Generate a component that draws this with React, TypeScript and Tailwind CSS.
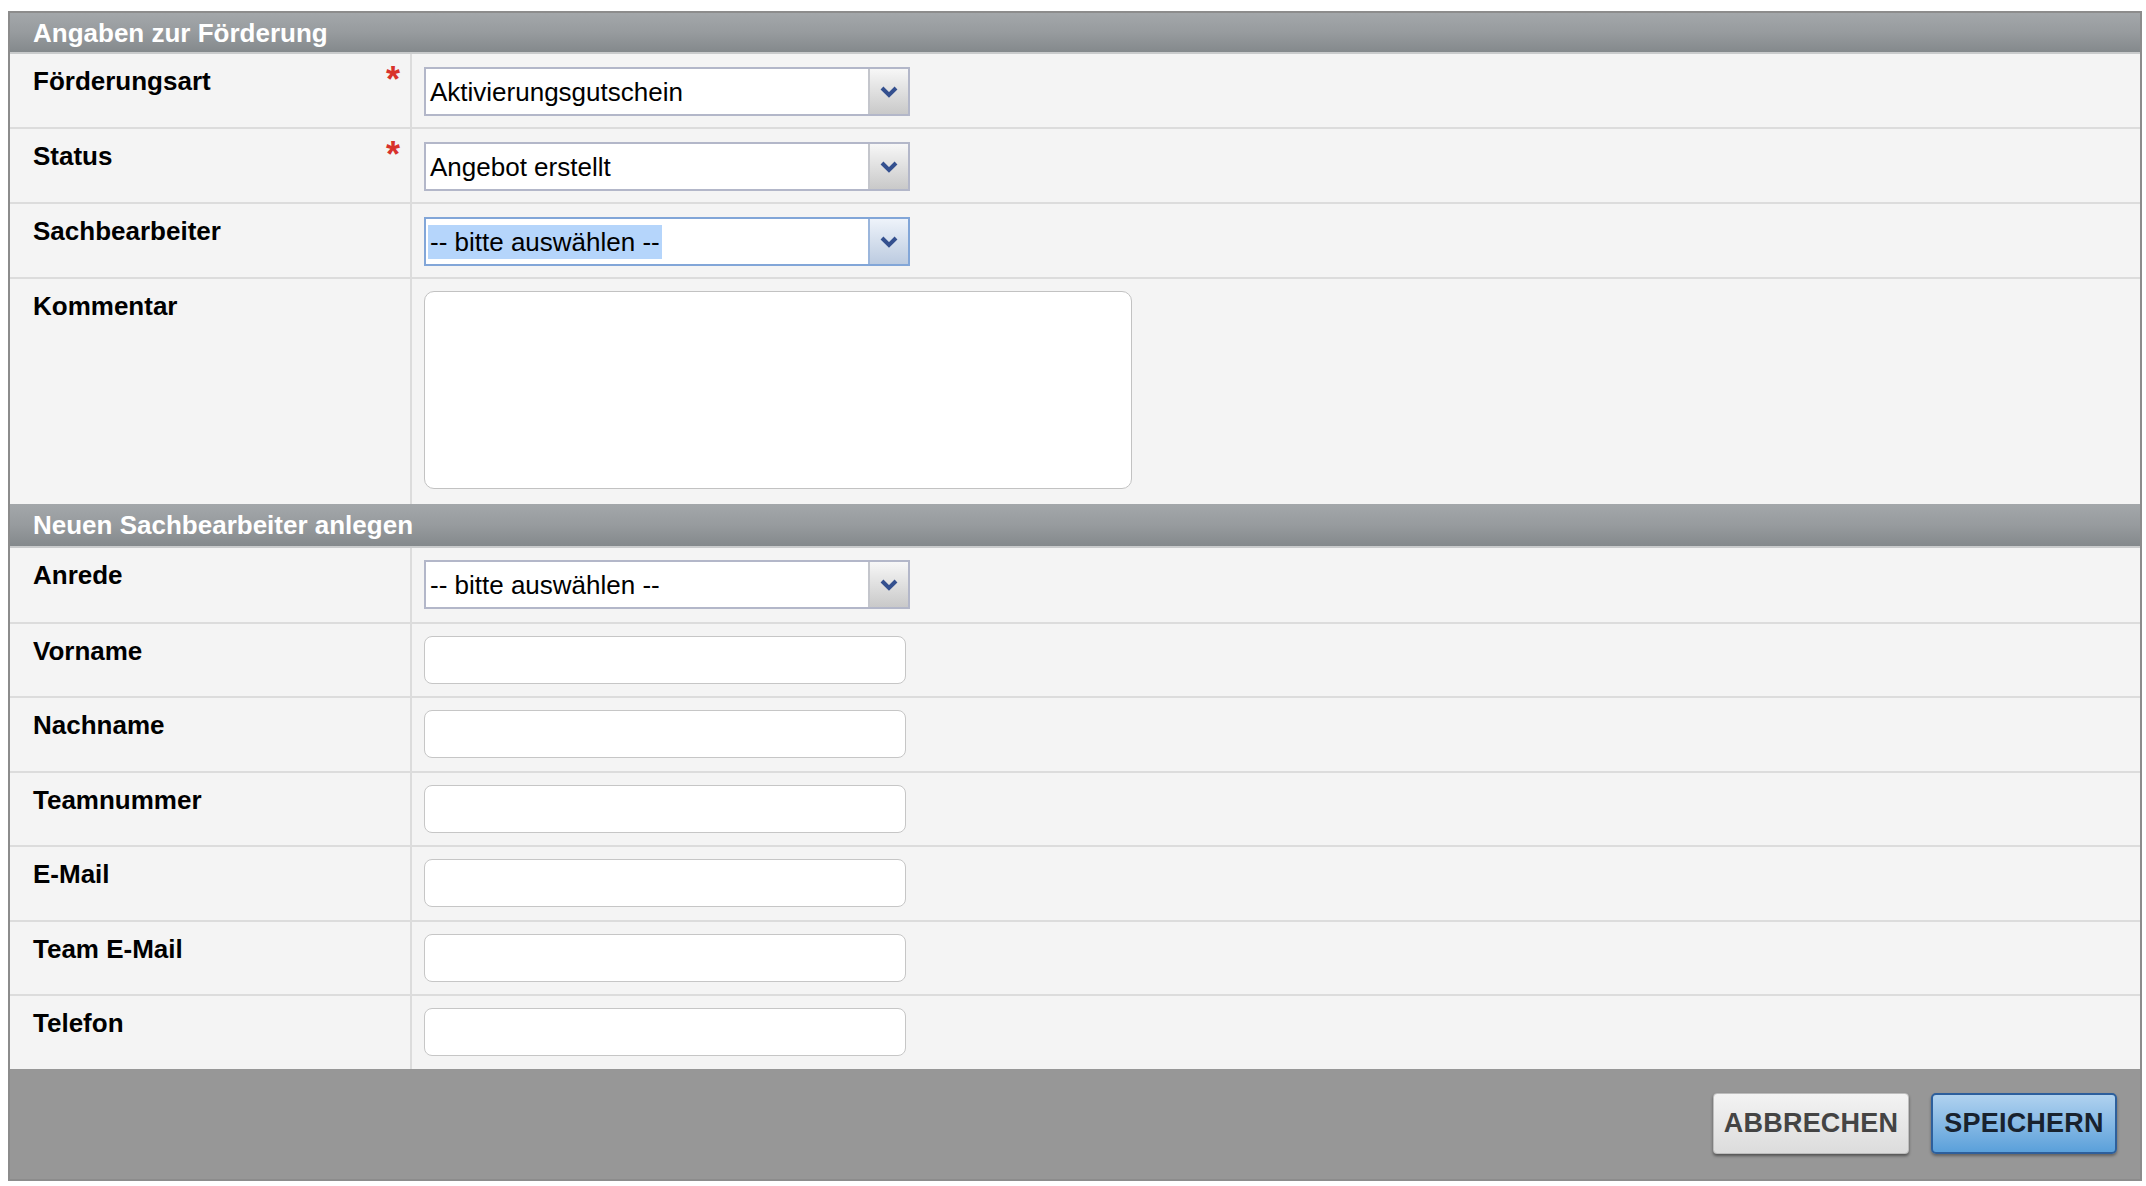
import React from "react";

const Chevron: React.FC<{ color?: string }> = ({ color = "#34508f" }) => (
  <svg width="18" height="12" viewBox="0 0 18 12">
    <path d="M2 2 L9 9 L16 2" fill="none" stroke={color} strokeWidth="4" strokeLinejoin="miter" />
  </svg>
);

const SectionHeader: React.FC<{ title: string; tall?: boolean }> = ({ title, tall }) => (
  <div
    className={`${tall ? "h-[44px]" : "h-[41px]"} flex items-center pl-[23px] bg-linear-to-b from-[#a3a7aa] via-[#979b9e] to-[#84898c] border-b-2 border-[#c9cbcc]`}
  >
    <span className="text-white font-bold text-[26px] leading-none">{title}</span>
  </div>
);

const Select: React.FC<{ value: string; focused?: boolean }> = ({ value, focused }) => (
  <div
    className={`flex w-[486px] h-[49px] border-2 bg-white ${
      focused ? "border-[#82a6d8]" : "border-[#b3b7c9]"
    }`}
  >
    <div className="flex-1 flex items-center pl-[2px]">
      <span className={`text-[26px] leading-[34px] text-black px-[2px] ${focused ? "bg-[#b5d5fb]" : ""}`}>
        {value}
      </span>
    </div>
    <div
      className={`w-[40px] flex items-center justify-center border-l-2 ${
        focused
          ? "border-[#9bb6dc] bg-linear-to-b from-[#eef3fa] to-[#bccbe0]"
          : "border-[#c4c6cc] bg-linear-to-b from-[#f7f7f7] to-[#c9c9c9]"
      }`}
    >
      <Chevron />
    </div>
  </div>
);

const TextInput: React.FC = () => (
  <div className="w-[482px] h-[48px] bg-white border-[1.5px] border-[#c6c6c6] rounded-[8px]" />
);

const Row: React.FC<{
  label: string;
  required?: boolean;
  compact?: boolean;
  children: React.ReactNode;
}> = ({ label, required, compact, children }) => (
  <div className="flex border-b-2 border-[#dcdcdc]">
    <div className="w-[402px] shrink-0 flex justify-between pl-[23px] pr-[10px] pt-[12px] border-r-2 border-[#dcdcdc]">
      <span className="font-bold text-[26px] leading-[30px] text-black">{label}</span>
      {required && (
        <span className="text-[#d8322c] font-bold text-[36px] leading-[30px] mt-[-1px]">*</span>
      )}
    </div>
    <div className={`flex-1 pl-[12px] ${compact ? "pt-[12px] pb-[12.5px]" : "pt-[13px] pb-[11px]"}`}>
      {children}
    </div>
  </div>
);

const App: React.FC = () => {
  const sachbearbeiterFields = ["Vorname", "Nachname", "Teamnummer", "E-Mail", "Team E-Mail", "Telefon"];

  return (
    <div
      className="w-[2146px] h-[1186px] bg-white pt-[11px] pl-[8px] pr-[4px]"
      style={{ fontFamily: "'Liberation Sans', Arial, sans-serif" }}
    >
      <div className="border-2 border-[#8c8c8c] bg-[#f4f4f4]">
        <SectionHeader title="Angaben zur Förderung" />
        <Row label="Förderungsart" required>
          <Select value="Aktivierungsgutschein" />
        </Row>
        <Row label="Status" required>
          <Select value="Angebot erstellt" />
        </Row>
        <Row label="Sachbearbeiter">
          <Select value="-- bitte auswählen --" focused />
        </Row>
        <div className="flex">
          <div className="w-[402px] shrink-0 pl-[23px] pt-[12px] border-r-2 border-[#dcdcdc]">
            <span className="font-bold text-[26px] leading-[30px] text-black">Kommentar</span>
          </div>
          <div className="flex-1 pl-[12px] pt-[12px] pb-[15px]">
            <div className="w-[708px] h-[198px] bg-white border-[1.5px] border-[#c2c2c2] rounded-[10px]" />
          </div>
        </div>

        <SectionHeader title="Neuen Sachbearbeiter anlegen" tall />
        <Row label="Anrede" compact>
          <Select value="-- bitte auswählen --" />
        </Row>
        {sachbearbeiterFields.map((f) => (
          <Row key={f} label={f} compact>
            <TextInput />
          </Row>
        ))}

        <div className="bg-[#979797] h-[110px] mt-[-2px] flex justify-end items-start pt-[24px] pr-[23px] gap-[22px]">
          <button className="w-[196px] h-[61px] rounded-[4px] border border-[#bdbdbd] bg-linear-to-b from-[#f3f3f3] to-[#dcdcdc] text-[#444] font-bold text-[27px] tracking-[0.2px] shadow-[0_2px_3px_rgba(0,0,0,0.45)]">
            ABBRECHEN
          </button>
          <button className="w-[186px] h-[61px] rounded-[5px] border-2 border-[#2d5f9c] bg-linear-to-b from-[#b0d2ef] to-[#5aa0da] text-[#18222e] font-bold text-[27px] tracking-[0.2px] shadow-[0_2px_3px_rgba(0,0,0,0.35)]">
            SPEICHERN
          </button>
        </div>
      </div>
    </div>
  );
};

export default App;
